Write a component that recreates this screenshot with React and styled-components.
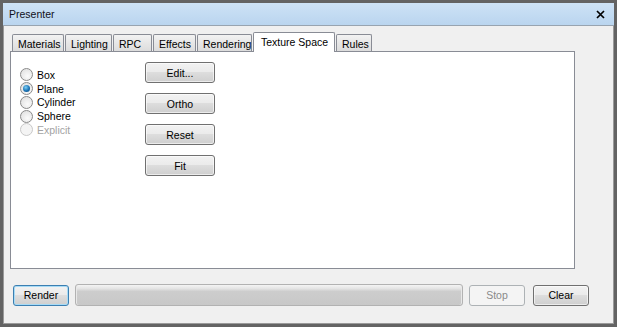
import React, { useState } from "react";
import styled, { createGlobalStyle, css } from "styled-components";

const GlobalStyle = createGlobalStyle`
  html, body {
    margin: 0;
    padding: 0;
    background: #f0f0f0;
  }
  body {
    font-family: "Liberation Sans", Arial, sans-serif;
    font-size: 10.5px;
    color: #000;
  }
`;

const tabs = [
  { label: "Materials", width: 52 },
  { label: "Lighting", width: 47 },
  { label: "RPC", width: 39 },
  { label: "Effects", width: 43 },
  { label: "Rendering", width: 55 },
  { label: "Texture Space", width: 82 },
  { label: "Rules", width: 36 },
];

const shapes = ["Box", "Plane", "Cylinder", "Sphere", "Explicit"];

export default function App() {
  const [active, setActive] = useState("Texture Space");
  const [shape, setShape] = useState("Plane");

  return (
    <>
      <GlobalStyle />
      <Window>
        <TitleBar>
          <Title>Presenter</Title>
          <CloseButton aria-label="Close">
            <svg width="9" height="9" viewBox="0 0 9 9">
              <path d="M1 1 L8 8 M8 1 L1 8" stroke="#000" strokeWidth="1.7" />
            </svg>
          </CloseButton>
        </TitleBar>
        <Body>
          <TabStrip>
            {tabs.map((t) => (
              <Tab
                key={t.label}
                $width={t.width}
                $active={t.label === active}
                onClick={() => setActive(t.label)}
              >
                {t.label}
              </Tab>
            ))}
          </TabStrip>
          <Panel>
            <RadioGroup>
              {shapes.map((s) => {
                const disabled = s === "Explicit";
                return (
                  <RadioRow key={s} $disabled={disabled} onClick={() => !disabled && setShape(s)}>
                    <RadioDot $checked={shape === s} $disabled={disabled} />
                    {s}
                  </RadioRow>
                );
              })}
            </RadioGroup>
            <ButtonColumn>
              <Button $w={70}>Edit...</Button>
              <Button $w={70}>Ortho</Button>
              <Button $w={70}>Reset</Button>
              <Button $w={70}>Fit</Button>
            </ButtonColumn>
          </Panel>
          <Footer>
            <Button $w={56} $focused>Render</Button>
            <Progress />
            <Button $w={56} disabled>Stop</Button>
            <Button $w={56}>Clear</Button>
          </Footer>
        </Body>
      </Window>
    </>
  );
}

const Window = styled.div`
  width: 617px;
  height: 327px;
  box-sizing: border-box;
  border: 3px solid #636363;
  box-shadow: inset 0 0 0 1px #9a9a9a;
  background: #f0f0f0;
  display: flex;
  flex-direction: column;
`;

const TitleBar = styled.div`
  height: 22px;
  flex: none;
  display: flex;
  align-items: center;
  justify-content: space-between;
  padding: 0 8px 0 6px;
  background: linear-gradient(#cde2f6, #bad5ef);
  border-bottom: 1px solid #98a4b0;
`;

const Title = styled.span`
  color: #101020;
`;

const CloseButton = styled.span`
  display: flex;
  width: 12px;
  justify-content: center;
`;

const Body = styled.div`
  flex: 1;
  display: flex;
  flex-direction: column;
  padding: 6px 0 0 7px;
`;

const TabStrip = styled.div`
  display: flex;
  align-items: flex-end;
  gap: 1px;
  height: 19px;
  padding-left: 2px;
  position: relative;
  z-index: 1;
`;

const Tab = styled.div`
  width: ${(p) => p.$width}px;
  box-sizing: border-box;
  height: 17px;
  border: 1px solid #898c95;
  border-bottom: none;
  border-radius: 2px 2px 0 0;
  background: linear-gradient(#f3f3f3, #e7e7e7 50%, #dcdcdc);
  display: flex;
  align-items: center;
  padding: 1px 0 0 5px;
  white-space: nowrap;
  cursor: default;
  ${(p) =>
    p.$active &&
    css`
      height: 20px;
      margin-bottom: -1px;
      background: #fff;
      align-items: flex-start;
      padding: 3px 0 0 7px;
    `}
`;

const Panel = styled.div`
  width: 565px;
  height: 218px;
  box-sizing: border-box;
  border: 1px solid #898c95;
  background: #fff;
  display: flex;
  align-items: flex-start;
  padding: 10px 0 0 9px;
`;

const RadioGroup = styled.div`
  width: 125px;
  margin-top: 6px;
  display: flex;
  flex-direction: column;
`;

const RadioRow = styled.label`
  display: flex;
  align-items: center;
  gap: 4px;
  height: 13.75px;
  color: ${(p) => (p.$disabled ? "#a3a3a3" : "#000")};
`;

const RadioDot = styled.span`
  width: 13px;
  height: 13px;
  flex: none;
  box-sizing: border-box;
  border-radius: 50%;
  border: 1px solid ${(p) => (p.$disabled ? "#c8c8c8" : "#8a8a8a")};
  background: ${(p) =>
    p.$disabled
      ? "#f4f4f4"
      : "radial-gradient(circle at 60% 65%, #fbfbfb, #dcdcdc)"};
  display: flex;
  align-items: center;
  justify-content: center;
  &::after {
    content: "";
    display: ${(p) => (p.$checked ? "block" : "none")};
    width: 7px;
    height: 7px;
    border-radius: 50%;
    background: radial-gradient(circle at 40% 35%, #7fd0f5, #1a73b5 55%, #0c4577);
  }
`;

const ButtonColumn = styled.div`
  display: flex;
  flex-direction: column;
  gap: 10px;
`;

const Button = styled.button`
  width: ${(p) => p.$w}px;
  height: 21px;
  flex: none;
  box-sizing: border-box;
  margin: 0;
  padding: 0;
  font-family: inherit;
  font-size: 10.5px;
  color: #000;
  border: 1px solid #707070;
  border-radius: 3px;
  background: linear-gradient(#f2f2f2, #ebebeb 45%, #dddddd 50%, #cfcfcf);
  box-shadow: inset 0 0 0 1px rgba(255, 255, 255, 0.6);
  ${(p) =>
    p.$focused &&
    css`
      border-color: #3c7fb1;
      box-shadow: inset 0 0 0 1px #a7dbf6;
    `}
  &:disabled {
    color: #8a8a8a;
    border-color: #adb2b5;
    background: #f4f4f4;
    box-shadow: none;
  }
`;

const Footer = styled.div`
  display: flex;
  align-items: center;
  margin-top: 15px;
  padding-left: 3px;
  gap: 6px;
  & > :last-child {
    margin-left: 2px;
  }
`;

const Progress = styled.div`
  width: 388px;
  height: 22px;
  box-sizing: border-box;
  border: 1px solid #b2b2b2;
  border-radius: 3px;
  background: linear-gradient(#f4f4f4, #e4e4e4 18%, #cdcdcd 32%, #c8c8c8);
  box-shadow: inset 1px 0 0 #e8e8e8, inset -1px 0 0 #e8e8e8;
`;
